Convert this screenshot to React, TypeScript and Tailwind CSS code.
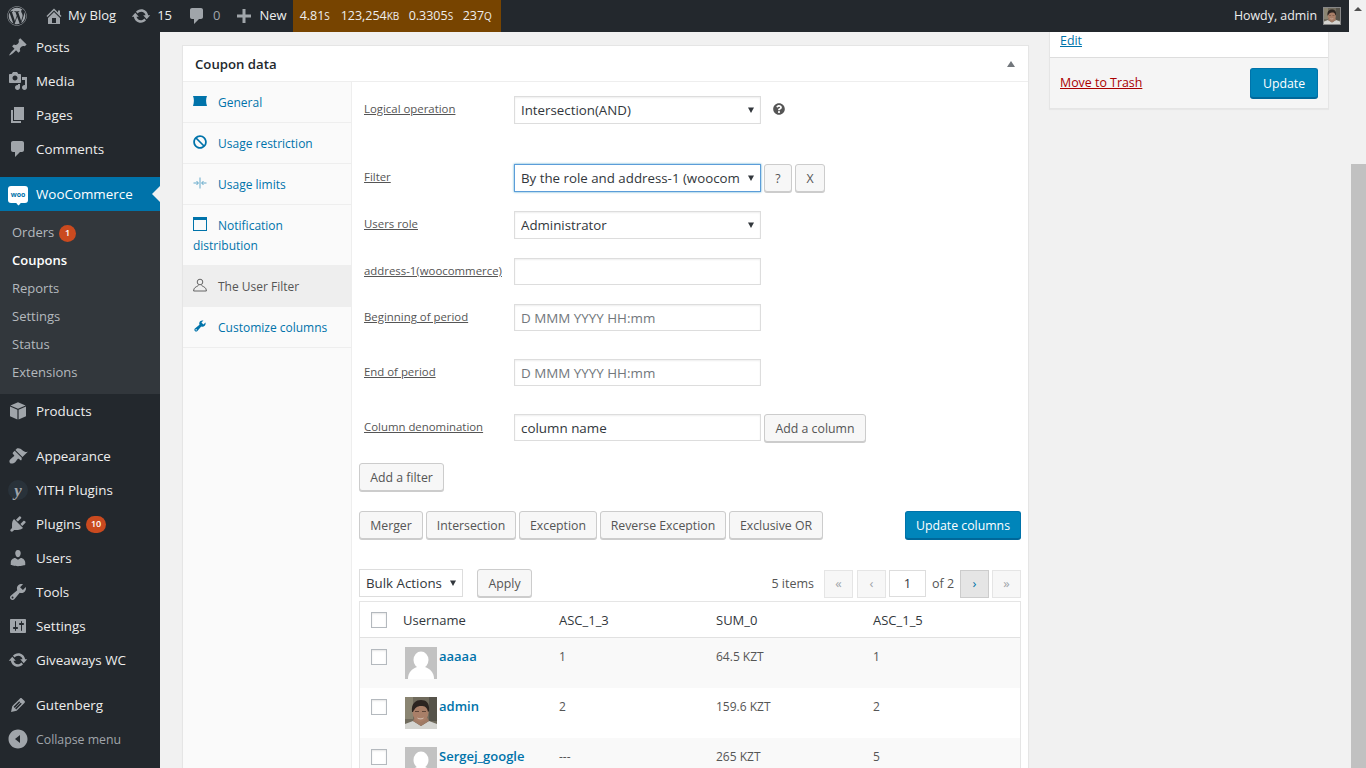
import { FaWordpress, FaQuestionCircle, FaBan } from 'react-icons/fa'

const P = {
  post: 'M10.44 3.02l1.82-1.82 6.36 6.35-1.83 1.82c-1.05-.68-2.48-.57-3.41.36l-.75.75c-.92.93-1.04 2.35-.35 3.41l-1.83 1.82-2.41-2.41-2.8 2.79c-.42.42-3.38 2.71-3.8 2.29s1.86-3.39 2.28-3.81l2.79-2.79L4.1 9.36l1.83-1.82c1.05.69 2.48.57 3.4-.36l.75-.75c.93-.92 1.05-2.35.36-3.41z',
  media: 'M13 11V4c0-.55-.45-1-1-1h-1.67L9 1H5L3.67 3H2c-.55 0-1 .45-1 1v7c0 .55.45 1 1 1h10c.55 0 1-.45 1-1zM7 4.5c1.38 0 2.5 1.12 2.5 2.5S8.38 9.5 7 9.5 4.5 8.38 4.5 7 5.62 4.5 7 4.5zM14 6h5v10.5c0 1.38-1.12 2.5-2.5 2.5S14 17.88 14 16.5s1.12-2.5 2.5-2.5c.17 0 .34.02.5.05V9h-3V6zm-4 8.05V13h2v3.5c0 1.38-1.12 2.5-2.5 2.5S7 17.88 7 16.5 8.12 14 9.5 14c.17 0 .34.02.5.05z',
  page: 'M6 15V2h10v13H6zm-1 1h8v2H3V5h2v11z',
  comment: 'M5 2h9c1.1 0 2 .9 2 2v7c0 1.1-.9 2-2 2h-2l-5 5v-5H5c-1.1 0-2-.9-2-2V4c0-1.1.9-2 2-2z',
  home: 'M16 8.5l1.53 1.53-1.06 1.06L10 4.62l-6.47 6.47-1.06-1.06L10 2.5l4 4v-2h2v4zm-6-2.46l6 5.99V18H4v-5.97zM12 17v-5H8v5h4z',
  update: 'M10.2 3.28c3.53 0 6.43 2.61 6.92 6h2.08l-3.5 4-3.5-4h2.32c-.45-1.97-2.21-3.45-4.32-3.45-1.45 0-2.73.71-3.54 1.78L4.95 5.66C6.23 4.2 8.11 3.28 10.2 3.28zm-.4 13.44c-3.52 0-6.43-2.61-6.92-6H.8l3.5-4c1.17 1.33 2.33 2.67 3.5 4H5.48c.45 1.97 2.21 3.45 4.32 3.45 1.45 0 2.73-.71 3.54-1.78l1.71 1.95c-1.28 1.46-3.15 2.38-5.25 2.38z',
  plus: 'M17 8.5v3h-5.5V17h-3v-5.5H3v-3h5.5V3h3v5.5H17z',
  appearance: 'M14.48 11.06L7.41 3.99l1.5-1.5c.5-.56 2.3-.47 3.51.32 1.21.8 1.43 1.28 2.91 2.1 1.18.64 2.45 1.26 4.45.85zm-.71.71L6.7 4.7 4.93 6.47c-.39.39-.39 1.02 0 1.41l1.06 1.06c.39.39.39 1.03 0 1.42-.6.6-1.43 1.11-2.21 1.69-.35.26-.7.53-1.01.84C1.43 13.23.91 15.95 1.98 17.02c1.07 1.07 3.79.55 5.16-.82.31-.31.58-.66.84-1.01.58-.78 1.09-1.61 1.69-2.21.39-.39 1.03-.39 1.42 0l1.06 1.06c.39.39 1.02.39 1.41 0z',
  plugins: 'M13.11 4.36L9.87 7.6 8 5.73l3.24-3.24c.35-.34 1.05-.2 1.56.32.52.51.66 1.21.31 1.55zm-8 1.77l.91-1.12 9.01 9.01-1.19.84c-.71.71-2.63 1.16-3.82 1.16H6.14L4.9 17.26c-.59.59-1.54.59-2.12 0-.59-.58-.59-1.53 0-2.12l1.24-1.24v-3.88c0-1.13.4-3.19 1.09-3.89zm7.26 3.97l3.24-3.24c.34-.35 1.04-.21 1.55.31.52.51.66 1.21.31 1.55l-3.24 3.25z',
  users: 'M10 9.25c-2.27 0-2.73-3.44-2.73-3.44C7 4.02 7.82 2 9.97 2c2.16 0 2.98 2.02 2.71 3.81 0 0-.41 3.44-2.68 3.44zm0 2.57L12.72 10c2.39 0 4.52 2.33 4.52 4.53v2.49s-3.65 1.13-7.24 1.13c-3.65 0-7.24-1.13-7.24-1.13v-2.49c0-2.25 1.94-4.48 4.47-4.48z',
  tools: 'M16.68 9.77c-1.34 1.34-3.3 1.67-4.95.99l-5.41 6.52c-.99.99-2.59.99-3.58 0s-.99-2.59 0-3.57l6.52-5.42c-.68-1.65-.35-3.61.99-4.95 1.28-1.28 3.12-1.62 4.72-1.06l-2.89 2.89 2.82 2.82 2.86-2.87c.53 1.58.18 3.39-1.08 4.65zM3.81 16.21c.4.39 1.04.39 1.43 0 .4-.4.4-1.04 0-1.43-.39-.4-1.03-.4-1.43 0-.39.39-.39 1.03 0 1.43z',
  settings: 'M18 16V4c0-.55-.45-1-1-1H3c-.55 0-1 .45-1 1v12c0 .55.45 1 1 1h14c.55 0 1-.45 1-1zM8 11h1c.55 0 1 .45 1 1s-.45 1-1 1H8v1.5c0 .28-.22.5-.5.5s-.5-.22-.5-.5V13H6c-.55 0-1-.45-1-1s.45-1 1-1h1V5.5c0-.28.22-.5.5-.5s.5.22.5.5V11zm5-2h-1c-.55 0-1-.45-1-1s.45-1 1-1h1V5.5c0-.28.22-.5.5-.5s.5.22.5.5V7h1c.55 0 1 .45 1 1s-.45 1-1 1h-1v5.5c0 .28-.22.5-.5.5s-.5-.22-.5-.5V9z',
  collapse: 'M10 .5c5.25 0 9.5 4.25 9.5 9.5s-4.25 9.5-9.5 9.5S.5 15.25.5 10 4.75.5 10 .5zM12 14V6l-5 4z',
  pencil: 'M13.89 3.39l2.71 2.72c.46.46.42 1.24.03 1.64l-8.01 8.02-5.56 1.16 1.16-5.58s7.6-7.63 7.99-8.03c.39-.39 1.22-.39 1.68.07zm-2.73 2.79l-5.59 5.61 1.11 1.11 5.54-5.65zm-2.97 8.23l5.58-5.6-1.07-1.08-5.59 5.6z',
  box: 'M10 1.2l7.6 3.3L10 7.8 2.4 4.5zM2 5.5l7.4 3.2v9.8L2 15.3zM18 5.5l-7.4 3.2v9.8l7.4-3.2z',
}

function Dash({ d, className }: { d: string; className: string }) {
  return (
    <svg viewBox="0 0 20 20" className={className} fill="currentColor" fillRule="evenodd">
      <path d={d} />
    </svg>
  )
}

function Face({ className }: { className: string }) {
  return (
    <svg viewBox="0 0 32 32" className={className}>
      <rect width="32" height="32" fill="#6f6a5c" />
      <rect x="0" y="0" width="8" height="22" fill="#8a8572" />
      <rect x="24" y="0" width="8" height="24" fill="#56534a" />
      <path d="M0 32v-5l8-3 8 5 8-5 8 3v5z" fill="#d4d4d0" />
      <path d="M8 24l8 5 8-5-2-4H10z" fill="#a07a64" />
      <ellipse cx="15.500" cy="15" rx="8" ry="10" fill="#a97f68" />
      <path d="M7 15C6 6 11 3 16 3s9 3 8 11l-1 1c-1-5-3-6-7-6s-6 2-8 6z" fill="#2b2420" />
      <rect x="10" y="14" width="4" height="1" fill="#5f4436" />
      <rect x="17" y="14" width="4" height="1" fill="#5f4436" />
      <path d="M12 20.500c2 1 5 1 7 0l-1 1.500c-1.500.6-3.500.6-5 0z" fill="#cdb6a8" />
    </svg>
  )
}

function Mystery() {
  return (
    <svg viewBox="0 0 32 32" className="w-8 h-8 shrink-0">
      <rect width="32" height="32" fill="#c2c2c2" />
      <ellipse cx="16" cy="13" rx="7.5" ry="8.5" fill="#fff" />
      <path d="M3 32c0-7 4-10 9-12h8c5 2 9 5 9 12z" fill="#fff" />
    </svg>
  )
}

function Caret() {
  return (
    <svg viewBox="0 0 8 8" className="w-2 h-2 shrink-0 text-[#32373c]" fill="currentColor">
      <path d="M1 1.5h6L4 7z" />
    </svg>
  )
}

function Select({ value, focus }: { value: string; focus?: boolean }) {
  return (
    <div
      className={
        focus
          ? 'w-[247px] h-[28px] flex items-center pl-[6px] pr-[5px] bg-white border border-[#5b9dd9] shadow-[0_0_2px_rgba(30,140,190,0.8)] text-[13.3px] text-[#32373c]'
          : 'w-[247px] h-[28px] flex items-center pl-[6px] pr-[5px] bg-white border border-[#ddd] shadow-[inset_0_1px_2px_rgba(0,0,0,0.07)] text-[13.3px] text-[#32373c]'
      }
    >
      <span className="flex-1 overflow-hidden whitespace-nowrap mr-[7px] mt-[2px]">{value}</span>
      <Caret />
    </div>
  )
}

function Input({ value, placeholder }: { value?: string; placeholder?: string }) {
  return (
    <div className="w-[247px] h-[27px] flex items-center pl-[6px] pt-[1px] bg-white border border-[#ddd] shadow-[inset_0_1px_2px_rgba(0,0,0,0.07)] text-[13.4px] text-[#32373c]">
      {value ?? <span className="text-[#72777c]">{placeholder}</span>}
    </div>
  )
}

function Btn({ children, className = '' }: { children: React.ReactNode; className?: string }) {
  return (
    <div className={`h-[28px] flex items-center justify-center shrink-0 pt-[2px] bg-[#f7f7f7] border border-[#ccc] rounded-[3px] shadow-[0_1px_0_#ccc] text-[12.3px] text-[#555] ${className}`}>
      {children}
    </div>
  )
}

function Primary({ children, className = '' }: { children: React.ReactNode; className?: string }) {
  return (
    <div className={`flex items-center justify-center shrink-0 pt-[2px] bg-[#0085ba] border border-[#0073aa] border-b-[#006799] rounded-[3px] shadow-[0_1px_0_#006799] text-[12.3px] text-white ${className}`}>
      {children}
    </div>
  )
}

function Row({ label, children, className = '' }: { label: string; children: React.ReactNode; className?: string }) {
  return (
    <div className={`flex items-start pl-[5px] ${className}`}>
      <div className="w-[150px] pt-[4px] text-[11.4px] leading-[18px] text-[#555] underline whitespace-nowrap">{label}</div>
      {children}
    </div>
  )
}

function MenuItem({ d, label, badge, className = '' }: { d: string; label: string; badge?: string; className?: string }) {
  return (
    <div className={`h-[34px] flex items-center pl-[8px] text-[13.4px] text-[#eee] ${className}`}>
      <Dash d={d} className="w-5 h-5 text-[#a0a5aa] shrink-0" />
      <span className="ml-[8px]">{label}</span>
      {badge && <Badge value={badge} className="ml-[5px]" />}
    </div>
  )
}

function Badge({ value, className = '' }: { value: string; className?: string }) {
  return (
    <span className={`h-[17px] min-w-[17px] px-[5px] flex items-center justify-center rounded-full bg-[#ca4a1f] text-[9px] font-semibold text-white ${className}`}>
      {value}
    </span>
  )
}

function Sidebar() {
  const sub = ['Reports', 'Settings', 'Status', 'Extensions']
  return (
    <div className="w-[160px] shrink-0 bg-[#23282d] -mt-[2px]">
      <MenuItem d={P.post} label="Posts" />
      <MenuItem d={P.media} label="Media" />
      <MenuItem d={P.page} label="Pages" />
      <MenuItem d={P.comment} label="Comments" />

      <div className="relative h-[34px] mt-[11px] flex items-center pl-[8px] bg-[#0073aa] text-[13.4px] text-white">
        <div className="relative w-5 h-[17px] rounded-[3px] bg-white flex items-center justify-center">
          <span className="text-[7px] leading-none font-bold text-[#0073aa]">woo</span>
          <span className="absolute -bottom-[2px] left-[9px] w-[3px] h-[3px] bg-white rotate-45" />
        </div>
        <span className="ml-[8px]">WooCommerce</span>
        <span className="absolute right-0 top-[9px] border-y-[8px] border-r-[8px] border-y-transparent border-r-[#f1f1f1]" />
      </div>
      <div className="bg-[#32373c] pt-[8px] h-[183px] text-[13px] text-[#b4b9be]">
        <div className="h-[28px] flex items-center pl-[12px]">
          Orders
          <Badge value="1" className="ml-[5px]" />
        </div>
        <div className="h-[28px] flex items-center pl-[12px] font-semibold text-white">Coupons</div>
        {sub.map(s => (
          <div key={s} className="h-[28px] flex items-center pl-[12px]">
            {s}
          </div>
        ))}
      </div>
      <MenuItem d={P.box} label="Products" />

      <MenuItem d={P.appearance} label="Appearance" className="mt-[11px]" />
      <div className="h-[34px] flex items-center pl-[8px] text-[13.4px] text-[#eee]">
        <span className="w-5 h-5 rounded-full bg-[#29323a] flex items-center justify-center font-['Liberation_Serif',serif] italic font-bold text-[17px] leading-none text-[#a0a5aa]">y</span>
        <span className="ml-[8px]">YITH Plugins</span>
      </div>
      <MenuItem d={P.plugins} label="Plugins" badge="10" />
      <MenuItem d={P.users} label="Users" />
      <MenuItem d={P.tools} label="Tools" />
      <MenuItem d={P.settings} label="Settings" />
      <MenuItem d={P.update} label="Giveaways WC" />

      <MenuItem d={P.pencil} label="Gutenberg" className="mt-[11px]" />
      <div className="h-[34px] flex items-center pl-[8px] text-[12.3px] text-[#a0a5aa]">
        <Dash d={P.collapse} className="w-5 h-5 shrink-0" />
        <span className="ml-[8px] mt-[3px]">Collapse menu</span>
      </div>
    </div>
  )
}

function TopBar() {
  const Stat = ({ v, u, className }: { v: string; u: string; className: string }) => (
    <span className={className}>
      {v}
      <span className="text-[10px]">{u}</span>
    </span>
  )
  return (
    <div className="relative z-10 h-[32px] flex items-center bg-[#23282d] text-[13px] text-[#eee]">
      <FaWordpress className="ml-[7px] w-5 h-5 text-[#a0a5aa]" />
      <Dash d={P.home} className="ml-[17px] w-5 h-5 text-[#a0a5aa]" />
      <span className="ml-[4px]">My Blog</span>
      <Dash d={P.update} className="ml-[15px] w-5 h-5 text-[#a0a5aa]" />
      <span className="ml-[6px]">15</span>
      <Dash d={P.comment} className="ml-[15px] w-5 h-5 text-[#a0a5aa]" />
      <span className="ml-[6px] text-[#a0a5aa]">0</span>
      <Dash d={P.plus} className="ml-[14px] w-5 h-5 text-[#a0a5aa]" />
      <span className="ml-[5px]">New</span>
      <div className="ml-[6px] w-[208px] h-full flex items-center pl-[7px] bg-[#774400] text-[12.5px]">
        <Stat v="4.81" u="S" className="w-[41px]" />
        <Stat v="123,254" u="KB" className="w-[68px]" />
        <Stat v="0.3305" u="S" className="w-[54px]" />
        <Stat v="237" u="Q" className="" />
      </div>
      <span className="ml-auto text-[12.4px]">Howdy, admin</span>
      <Face className="ml-[6px] mr-[8px] w-[18px] h-[18px] border border-[#888]" />
    </div>
  )
}

function TabLine({ children, active }: { children: React.ReactNode; active?: boolean }) {
  return (
    <div className={active ? 'pl-[10px] pr-[10px] pt-[11px] pb-[9px] leading-[20px] border-b border-[#eee] bg-[#eee] text-[#555]' : 'pl-[10px] pr-[10px] pt-[11px] pb-[9px] leading-[20px] border-b border-[#eee] text-[#0073aa]'}>
      {children}
    </div>
  )
}

function Tabs() {
  const ic = 'inline-block w-[14px] h-[14px] mr-[11px] align-[-1px]'
  return (
    <div className="w-[169px] shrink-0 bg-[#fafafa] border-r border-[#eee] text-[12px] self-stretch">
      <TabLine>
        <svg viewBox="0 0 14 14" className={ic} fill="currentColor">
          <path d="M0 2h14C12.800 4.500 12.800 8.500 14 12H0C1.200 8.500 1.200 4.500 0 2z" />
        </svg>
        General
      </TabLine>
      <TabLine>
        <FaBan className={ic} />
        Usage restriction
      </TabLine>
      <TabLine>
        <svg viewBox="0 0 14 14" className={ic} fill="none" stroke="currentColor" strokeWidth="0.8" opacity="0.75">
          <path d="M7 1.5v11M0.5 7h4.500M9 7h4.500M3.500 5l2 2-2 2M10.500 5l-2 2 2 2" />
        </svg>
        Usage limits
      </TabLine>
      <TabLine>
        <svg viewBox="0 0 14 14" className={ic} fill="none" stroke="currentColor">
          <rect x="0.5" y="0.5" width="13" height="13" />
          <rect x="0" y="0" width="14" height="3" fill="currentColor" stroke="none" />
        </svg>
        Notification distribution
      </TabLine>
      <TabLine active>
        <svg viewBox="0 0 14 14" className={ic} fill="none" stroke="currentColor" strokeWidth="0.9">
          <circle cx="7" cy="4" r="2.800" />
          <path d="M5.500 7.500C3 9 .6 9.500.6 13h12.800c0-3.500-2.400-4-4.900-5.500" />
        </svg>
        The User Filter
      </TabLine>
      <TabLine>
        <Dash d={P.tools} className={ic} />
        Customize columns
      </TabLine>
    </div>
  )
}

function Form() {
  return (
    <div className="flex-1 pl-[7px] pr-[7px] pt-[14px]">
      <Row label="Logical operation">
        <Select value="Intersection(AND)" />
        <FaQuestionCircle className="ml-[12px] mt-[7px] w-3 h-3 text-[#555]" />
      </Row>
      <Row label="Filter" className="mt-[40px]">
        <Select value="By the role and address-1 (woocom" focus />
        <Btn className="ml-[3px] w-[28px]">?</Btn>
        <Btn className="ml-[3px] w-[30px]">X</Btn>
      </Row>
      <Row label="Users role" className="mt-[19px]">
        <Select value="Administrator" />
      </Row>
      <Row label="address-1(woocommerce)" className="mt-[19px]">
        <Input value="" />
      </Row>
      <Row label="Beginning of period" className="mt-[19px]">
        <Input placeholder="D MMM YYYY HH:mm" />
      </Row>
      <Row label="End of period" className="mt-[28px]">
        <Input placeholder="D MMM YYYY HH:mm" />
      </Row>
      <Row label="Column denomination" className="mt-[28px]">
        <Input value="column name" />
        <Btn className="ml-[3px] w-[102px]">Add a column</Btn>
      </Row>

      <Btn className="mt-[21px] w-[85px]">Add a filter</Btn>

      <div className="mt-[20px] flex gap-[3px]">
        <Btn className="w-[64px]">Merger</Btn>
        <Btn className="w-[90px]">Intersection</Btn>
        <Btn className="w-[78px]">Exception</Btn>
        <Btn className="w-[126px]">Reverse Exception</Btn>
        <Btn className="w-[94px]">Exclusive OR</Btn>
        <Primary className="ml-auto w-[116px] h-[28px]">Update columns</Primary>
      </div>

      <div className="mt-[30px] flex items-start">
        <div className="w-[104px] h-[28px] flex items-center justify-between pl-[6px] pr-[5px] bg-white border border-[#ddd] text-[13.3px] text-[#32373c]">
          <span className="mt-[2px]">Bulk Actions</span>
          <Caret />
        </div>
        <Btn className="ml-[14px] w-[55px]">Apply</Btn>
        <div className="ml-auto flex items-start text-[12.5px] text-[#555] mt-[1px]">
          <span className="h-[28px] flex items-center mr-[10px]">5 items</span>
          <PageBtn>«</PageBtn>
          <PageBtn className="ml-[4px]">‹</PageBtn>
          <div className="ml-[3px] w-[37px] h-[27px] flex items-center justify-center bg-white border border-[#ddd] text-[13px] text-[#32373c]">1</div>
          <span className="h-[28px] w-[34px] flex items-center justify-center">of 2</span>
          <div className="w-[29px] h-[28px] flex items-center justify-center bg-[#e5e5e5] border border-[#ccc] text-[13px] text-[#0073aa]">›</div>
          <PageBtn className="ml-[3px]">»</PageBtn>
        </div>
      </div>

      <Table />
    </div>
  )
}

function PageBtn({ children, className = '' }: { children: React.ReactNode; className?: string }) {
  return (
    <div className={`w-[29px] h-[28px] flex items-center justify-center bg-[#f7f7f7] border border-[#e5e5e5] text-[13px] text-[#a0a5aa] ${className}`}>
      {children}
    </div>
  )
}

function Check({ className = '' }: { className?: string }) {
  return <div className={`w-4 h-4 shrink-0 bg-white border border-[#b4b9be] shadow-[inset_0_1px_2px_rgba(0,0,0,0.1)] ${className}`} />
}

function Table() {
  const rows = [
    { name: 'aaaaa', a: '1', sum: '64.5 KZT', b: '1', photo: false },
    { name: 'admin', a: '2', sum: '159.6 KZT', b: '2', photo: true },
    { name: 'Sergej_google', a: '---', sum: '265 KZT', b: '5', photo: false },
  ]
  return (
    <div className="mt-[3px] bg-white border border-[#e5e5e5]">
      <div className="h-[36px] flex items-center border-b border-[#e1e1e1] text-[13px] text-[#32373c]">
        <div className="w-[43px] pl-[11px]">
          <Check />
        </div>
        <div className="w-[156px] pt-[2px]">Username</div>
        <div className="w-[157px] pt-[2px]">ASC_1_3</div>
        <div className="w-[157px] pt-[2px]">SUM_0</div>
        <div className="pt-[2px]">ASC_1_5</div>
      </div>
      {rows.map((r, i) => (
        <div key={r.name} className={i % 2 === 0 ? 'h-[50px] flex items-start pt-[9px] bg-[#f9f9f9] text-[12px] leading-[18px] text-[#555]' : 'h-[50px] flex items-start pt-[9px] bg-white text-[12px] leading-[18px] text-[#555]'}>
          <div className="w-[43px] pl-[11px] pt-[2px]">
            <Check />
          </div>
          <div className="w-[156px] pl-[2px] flex items-start">
            {r.photo ? <Face className="w-8 h-8 shrink-0" /> : <Mystery />}
            <span className="ml-[2px] text-[13px] font-semibold text-[#0073aa]">{r.name}</span>
          </div>
          <div className="w-[157px] pt-[1px]">{r.a}</div>
          <div className="w-[157px] pt-[1px]">{r.sum}</div>
          <div className="pt-[1px]">{r.b}</div>
        </div>
      ))}
    </div>
  )
}

export default function App() {
  return (
    <div className="w-[1366px] h-[768px] flex overflow-hidden bg-[#f1f1f1] font-['Open_Sans',sans-serif]">
      <div className="w-[1349px] h-full flex flex-col">
        <TopBar />
        <div className="flex-1 flex min-h-0">
          <Sidebar />
          <div className="flex-1 flex items-start pl-[22px]">
            <div className="w-[847px] mt-[13px] bg-white border border-[#e5e5e5] shadow-[0_1px_1px_rgba(0,0,0,0.04)]">
              <div className="h-[36px] flex items-center justify-between pl-[12px] pr-[13px] pt-[2px] border-b border-[#eee] text-[13.2px] font-semibold text-[#23282d]">
                Coupon data
                <span className="-mt-[2px] border-x-[4px] border-b-[6px] border-x-transparent border-b-[#72777c]" />
              </div>
              <div className="flex h-[690px]">
                <Tabs />
                <Form />
              </div>
            </div>
            <div className="w-[280px] ml-[20px] bg-white border-x border-b border-[#e5e5e5] shadow-[0_1px_1px_rgba(0,0,0,0.04)]">
              <div className="h-[25px] pl-[10px] text-[12.4px] leading-[18px] text-[#0073aa] underline">Edit</div>
              <div className="h-[51px] flex items-center justify-between pl-[10px] pr-[10px] bg-[#f5f5f5] border-t border-[#ddd] text-[12.4px]">
                <span className="mt-[1px] text-[#a00] underline">Move to Trash</span>
                <Primary className="w-[68px] h-[30px]">Update</Primary>
              </div>
            </div>
          </div>
        </div>
      </div>
      <div className="w-[17px] h-full flex flex-col bg-[#f1f1f1]">
        <div className="h-[164px] pt-[7px] flex justify-center">
          <span className="h-0 border-x-[4px] border-b-[4px] border-x-transparent border-b-[#505050]" />
        </div>
        <div className="flex-1 ml-[2px] bg-[#c1c1c1]" />
      </div>
    </div>
  )
}
